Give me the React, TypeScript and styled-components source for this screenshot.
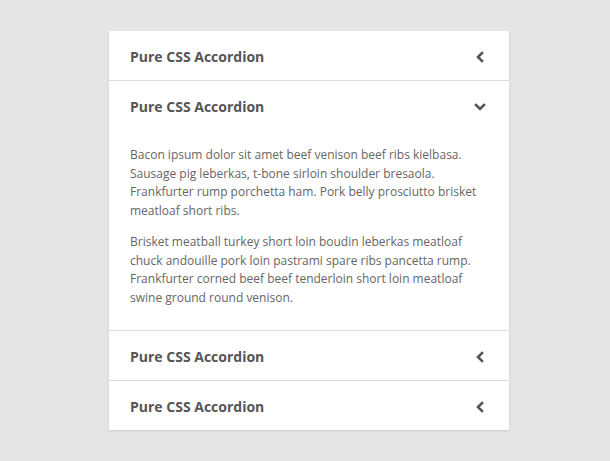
import React from "react";
import styled, { createGlobalStyle } from "styled-components";

const Global = createGlobalStyle`
  html, body { margin: 0; padding: 0; background: #e5e5e5; }
  body { font-family: "Open Sans", "Noto Sans", sans-serif; }
`;

const Page = styled.div`
  padding: 31px 0 30px 109px;
`;

const Card = styled.div`
  width: 400px;
  background: #fff;
  box-shadow: 0 1px 2px rgba(0, 0, 0, 0.12);
`;

const Item = styled.div<{ $last?: boolean }>`
  border-bottom: ${(p) => (p.$last ? "none" : "1px solid #dedede")};
`;

const Header = styled.div`
  box-sizing: border-box;
  height: 49px;
  display: flex;
  align-items: center;
  justify-content: space-between;
  padding: 2px 23px 0 21px;
  color: #555;
  font-weight: 700;
  font-size: 14px;
`;

const Icon = styled.svg`
  display: block;
  width: 12px;
  height: 12px;
  color: #555;
`;

const Body = styled.div`
  padding: 16px 21px 23px 21px;
  color: #666;
  font-size: 12px;
  line-height: 18.5px;
  p { margin: 0 0 13px 0; }
  p:last-child { margin-bottom: 0; }
`;

const Chevron = ({ open }: { open: boolean }) => (
  <Icon viewBox="0 0 12 12">
    <path
      d={open ? "M2 4 L6 8 L10 4" : "M8 2 L4 6 L8 10"}
      fill="none"
      stroke="currentColor"
      strokeWidth={2.6}
      strokeLinecap="square"
      strokeLinejoin="miter"
    />
  </Icon>
);

const items = [
  { open: false },
  { open: true },
  { open: false },
  { open: false },
];

export default function App() {
  return (
    <Page>
      <Global />
      <Card>
        {items.map((it, i) => (
          <Item key={i} $last={i === items.length - 1}>
            <Header>
              <span>Pure CSS Accordion</span>
              <Chevron open={it.open} />
            </Header>
            {it.open && (
              <Body>
                <p>
                  Bacon ipsum dolor sit amet beef venison beef ribs kielbasa. Sausage pig leberkas, t-bone sirloin
                  shoulder bresaola. Frankfurter rump porchetta ham. Pork belly prosciutto brisket meatloaf short ribs.
                </p>
                <p>
                  Brisket meatball turkey short loin boudin leberkas meatloaf chuck andouille pork loin pastrami spare
                  ribs pancetta rump. Frankfurter corned beef beef tenderloin short loin meatloaf swine ground round
                  venison.
                </p>
              </Body>
            )}
          </Item>
        ))}
      </Card>
    </Page>
  );
}
